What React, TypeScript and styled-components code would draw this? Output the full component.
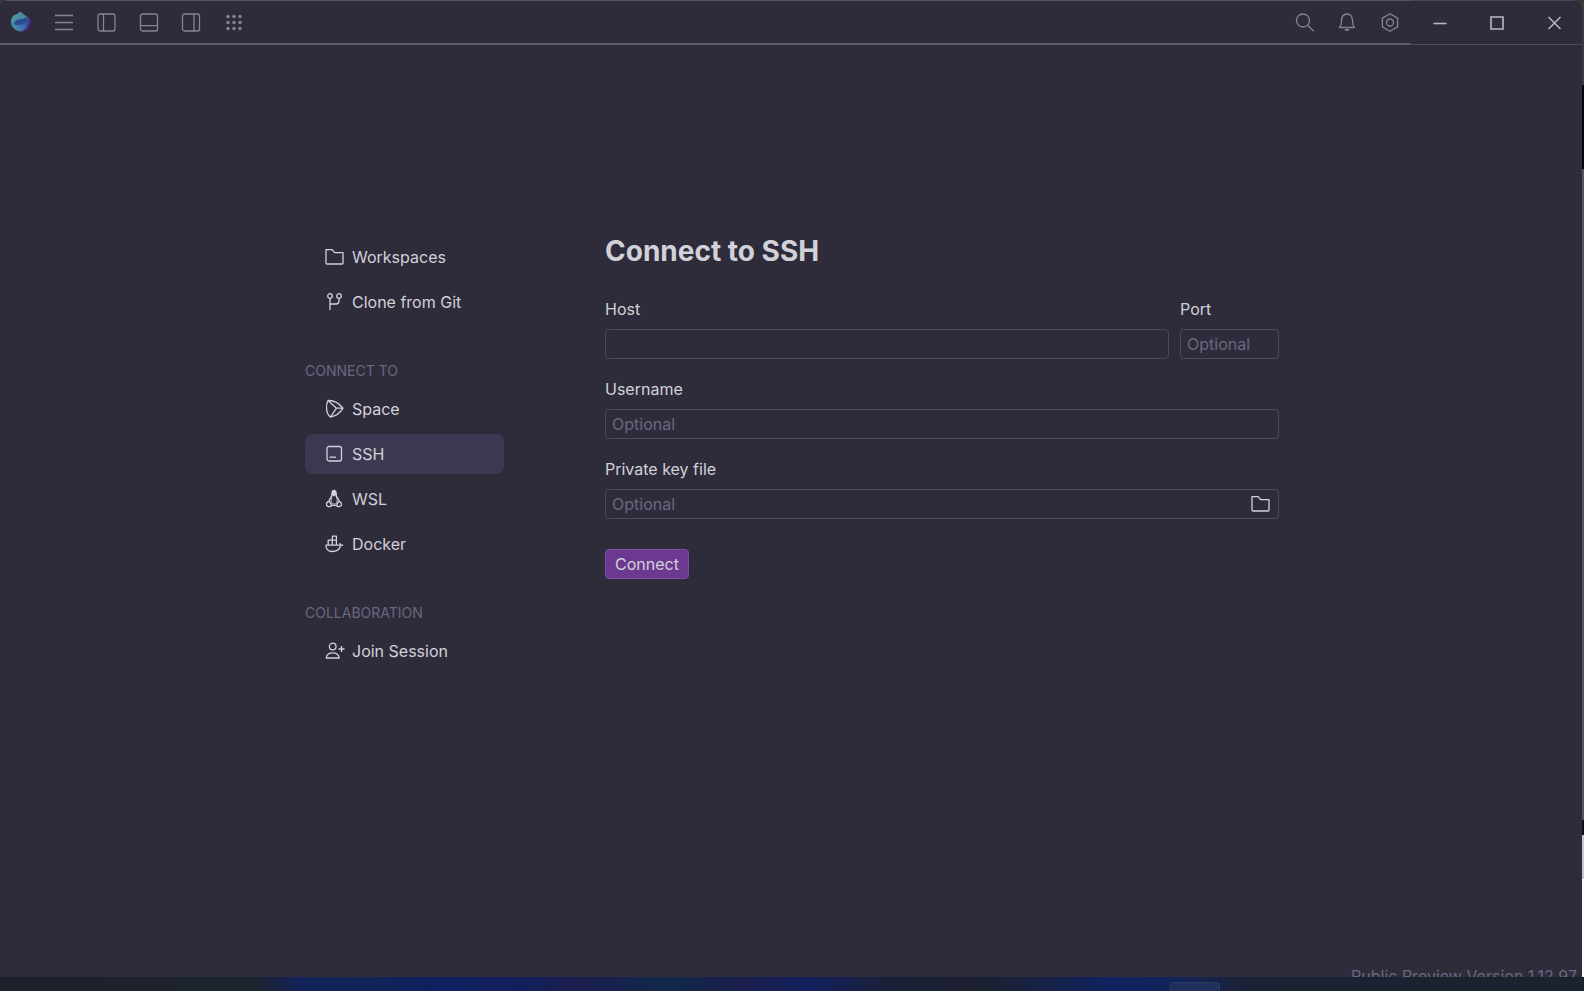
import React from "react";
import styled, { createGlobalStyle } from "styled-components";

const color = {
  surface: "#2e2c3a",
  line: "#5b596b",
  border: "#4c495e",
  text: "#d2d1d9",
  muted: "#6a6780",
  toolIcon: "#86848f",
  selected: "#3d3852",
  primary: "#6b3a90",
};

const GlobalStyle = createGlobalStyle`
  *, *::before, *::after { box-sizing: border-box; }
  body {
    margin: 0;
    background: #37383c;
    color: ${color.text};
    font-family: Inter, "Liberation Sans", sans-serif;
    font-size: 16px;
    line-height: 20px;
  }
  button, input { font: inherit; color: inherit; }
`;

const Desktop = styled.div`
  display: flex;
  flex-direction: column;
  height: 100vh;
`;

const WindowRow = styled.div`
  display: flex;
  flex: 1;
  min-height: 0;
`;

const AppWindow = styled.div`
  display: flex;
  flex-direction: column;
  flex: 1;
  min-width: 0;
  overflow: hidden;
  background: ${color.surface};
  border-radius: 8px 10px 0 0;
`;

const Backdrop = styled.div`
  width: 2px;
  background: linear-gradient(
    #3a3b3e 0 85px,
    #060606 85px 169px,
    #555558 169px 820px,
    #101010 820px 835px,
    #c9c9c9 835px 879px,
    #ffffff 879px
  );
`;

const TitleBar = styled.header`
  display: flex;
  height: 45px;
  flex: none;
`;

const ToolArea = styled.div`
  display: flex;
  flex: 1;
  justify-content: space-between;
  border-top: 1px solid #56555f;
  border-bottom: 2px solid ${color.line};
`;

const Brand = styled.div`
  display: flex;
  align-items: center;
`;

const LogoBox = styled.div`
  display: flex;
  width: 43px;
  padding-left: 10px;
`;

const ToolGroup = styled.div<{ $width: number }>`
  display: flex;
  width: ${(p) => p.$width}px;
  height: 100%;
`;

const BarButton = styled.button`
  display: flex;
  flex: 1;
  align-items: center;
  justify-content: center;
  padding: 0;
  border: 0;
  background: none;
  color: ${color.toolIcon};
`;

const WindowControls = styled.div`
  display: flex;
  width: 171px;
  border-top: 1px solid #4a4a4e;
  border-bottom: 1px solid #4c4961;

  ${BarButton} { color: #b9b8c2; }
`;

const Content = styled.main`
  display: flex;
  flex: 1;
  justify-content: center;
  align-items: flex-start;
  gap: 101px;
  min-height: 0;
  padding: 189px 24px 0 26px;
`;

const Sidebar = styled.nav`
  display: flex;
  flex-direction: column;
  gap: 38px;
  width: 199px;
  padding-top: 3px;
`;

const NavList = styled.ul`
  display: flex;
  flex-direction: column;
  gap: 5px;
  margin: 0;
  padding: 0;
  list-style: none;
`;

const SectionTitle = styled.h2`
  margin: 0 0 7px;
  color: ${color.muted};
  font-size: 14px;
  font-weight: 400;
  line-height: 22px;
`;

const NavButton = styled.button<{ $active?: boolean }>`
  display: flex;
  align-items: center;
  gap: 7px;
  width: 100%;
  height: 40px;
  padding: 0 20px;
  border: 0;
  border-radius: 8px;
  background: ${(p) => (p.$active ? color.selected : "transparent")};
  text-align: left;
  white-space: nowrap;
`;

const Form = styled.form`
  display: flex;
  flex-direction: column;
  flex: 0 1 674px;
  gap: 20px;
`;

const Title = styled.h1`
  margin: 0 0 11px;
  font-size: 28px;
  font-weight: 700;
  line-height: 34px;
`;

const FieldRow = styled.div`
  display: flex;
  gap: 11px;
`;

const Field = styled.div<{ $width?: number }>`
  display: flex;
  flex-direction: column;
  gap: 10px;
  flex: ${(p) => (p.$width ? `0 0 ${p.$width}px` : "1")};
  min-width: 0;
`;

const Label = styled.label`
  line-height: 20px;
`;

const InputFrame = styled.div`
  display: flex;
  align-items: center;
  height: 30px;
  border: 1px solid ${color.border};
  border-radius: 4px;
`;

const Input = styled.input`
  flex: 1;
  min-width: 0;
  height: 28px;
  padding: 0 6px;
  border: 0;
  outline: 0;
  background: none;

  &::placeholder { color: ${color.muted}; opacity: 1; }
`;

const BrowseButton = styled.button`
  display: flex;
  padding: 0 7px;
  border: 0;
  background: none;
`;

const ConnectButton = styled.button`
  align-self: flex-start;
  height: 30px;
  margin-top: 10px;
  padding: 0 9px;
  border: 1px solid #7d4da1;
  border-radius: 4px;
  background: ${color.primary};
`;

const VersionBar = styled.footer`
  height: 10px;
  flex: none;
  overflow: hidden;
  padding-right: 5px;
  color: ${color.muted};
  line-height: 18px;
  text-align: right;
`;

const Taskbar = styled.div`
  display: flex;
  justify-content: flex-end;
  align-items: flex-end;
  height: 14px;
  flex: none;
  padding-right: 23%;
  background: linear-gradient(
    90deg,
    #1c212b 0%, #1c242d 16%, #12235a 19%, #112457 24%, #10205f 27%,
    #121f5c 33%, #1c1d4f 36%, #12284a 42%, #1b1e4c 47%, #12205e 51%,
    #1b2038 56%, #1b212f 62%, #11235f 70%, #12235a 74%, #1b2233 79%,
    #1b232e 100%
  );
`;

const TaskbarItem = styled.div`
  width: 50px;
  height: 9px;
  border: 1px solid #2c3f66;
  border-bottom: 0;
  border-radius: 4px 4px 0 0;
  background: #1f305a;
`;

const Glyph = styled.svg`
  display: block;
  flex: none;
  fill: none;
  stroke: currentColor;
`;

type IconProps = { children: React.ReactNode; weight?: number };

const Icon = ({ children, weight = 1.3 }: IconProps) => (
  <Glyph width="20" height="20" viewBox="0 0 20 20" strokeWidth={weight} strokeLinejoin="round" aria-hidden="true">
    {children}
  </Glyph>
);

const Logo = () => (
  <Glyph width="22" height="22" viewBox="0 0 22 22" aria-hidden="true">
    <defs>
      <linearGradient id="shell" x1="0" y1="0" x2="1" y2="0.5">
        <stop offset="0" stopColor="#4f9f9c" />
        <stop offset="0.65" stopColor="#4389a0" />
        <stop offset="1" stopColor="#45308c" />
      </linearGradient>
      <linearGradient id="core" x1="0" y1="1" x2="1" y2="0">
        <stop offset="0" stopColor="#4a94ae" />
        <stop offset="0.5" stopColor="#3c6cb0" />
        <stop offset="1" stopColor="#2b4388" />
      </linearGradient>
    </defs>
    <path d="M17 6.500c3 0 4.200 1.200 4 4.500-.3 5-4 9.500-9 9.500z" fill="#41238a" stroke="none" />
    <path d="M6 3.500C8 3 9 1 10.500 1s2.500 2.500 5 3.500S20 8 19.500 11.500c-.8 5-4.500 9.200-8.500 9.200S1 17 1 11c0-4 2-7 5-7.500z" fill="url(#shell)" stroke="none" />
    <path d="M3.500 13.500C4 10 6.500 8.500 10 8.300c3-.2 5.500-1.300 7.500-.8 2.500 4-1 10-5 11.500-4.500 1-8.500-1.500-9-5.500z" fill="url(#core)" stroke="none" />
    <path d="M4 12.500C5 9.800 7.500 8.700 10 8.500c3-.2 5.500-1.300 7.300-.8-.3 3.300-3.300 5.300-6.800 6s-5.500.3-6.500-1.200z" fill="#2c4c92" stroke="none" />
  </Glyph>
);

const MenuIcon = () => <Icon><path d="M1 3.500h18M1 10.500h18M1 17.500h18" /></Icon>;
const PanelLeftIcon = () => (
  <Icon><rect x="1" y="2" width="17" height="17" rx="2" /><path d="M6.500 2v17" /></Icon>
);
const PanelBottomIcon = () => (
  <Icon><rect x="1.500" y="2" width="17" height="17" rx="2" /><path d="M1.500 13.700h17" /></Icon>
);
const PanelRightIcon = () => (
  <Icon><rect x="1.500" y="2" width="17" height="17" rx="2" /><path d="M13 2v17" /></Icon>
);
const AppsIcon = () => (
  <Icon>
    {[4.5, 10.5, 16.5].map((y) =>
      [4, 10, 16].map((x) => <circle key={`${x}-${y}`} cx={x} cy={y} r="1.700" fill="currentColor" stroke="none" />),
    )}
  </Icon>
);
const SearchIcon = () => <Icon><circle cx="8" cy="8.500" r="6.500" /><path d="m12.700 13.200 6 6" /></Icon>;
const BellIcon = () => (
  <Icon>
    <path d="M2.500 15.500h15c-1.500-1.700-2-3.500-2-6.500 0-4.500-2-7-5.500-7S4.500 4.500 4.500 9c0 3-.5 4.800-2 6.500z" />
    <path d="M7.500 17h5c-.3 1.300-1.200 2-2.500 2s-2.200-.7-2.500-2z" fill="currentColor" stroke="none" />
  </Icon>
);
const SettingsIcon = () => (
  <Icon><path d="m10 1.700 7.600 4.400v8.800L10 19.300l-7.600-4.400V6.100z" /><circle cx="10" cy="10.500" r="3.500" /></Icon>
);
const MinimizeIcon = () => <Icon weight={1.6}><path d="M3.500 10.500h13" /></Icon>;
const MaximizeIcon = () => <Icon weight={1.6}><path d="M4 4h12v12H4z" strokeLinejoin="miter" /></Icon>;
const CloseIcon = () => <Icon weight={1.5}><path d="m4.500 4 12 12M16.500 4l-12 12" /></Icon>;

const FolderIcon = () => (
  <Icon><path d="M1 16V2.700h6.200l2.300 3H18V16a1 1 0 0 1-1 1H2a1 1 0 0 1-1-1z" /></Icon>
);
const BranchIcon = () => (
  <Icon>
    <circle cx="5" cy="4" r="2.300" /><circle cx="14" cy="4" r="2.300" />
    <path d="M5 6.300V18M14 6.300V9c0 2-1 3-3 3H5" />
  </Icon>
);
const SpaceIcon = () => (
  <Icon>
    <path d="M3 1.500c6-.2 11 2.500 15 7.700-3 5-7 8-12.500 8.800C1 15 .5 6 3 1.500z" />
    <path d="m3 1.500 8.500 7.700H18M11.500 9.200 5.500 18" />
  </Icon>
);
const TerminalIcon = () => (
  <Icon><rect x="2" y="2.500" width="14.500" height="14.500" rx="2" /><path d="M4.500 13.200H11" /></Icon>
);
const PenguinIcon = () => (
  <Icon>
    <path d="M6.300 5.500V4c0-2 1-3.300 2.700-3.300S11.800 2 11.800 4v1.500L9 7.500z" fill="currentColor" stroke="none" />
    <path d="M6.800 5v2c-1.500 2-2.500 3.500-2.800 5.500M11.300 5v2c1.500 2 2.700 3.500 3 5.500" />
    <path d="M6.800 7.500C5.500 11 6 13.500 7.500 15h3.300c1.500-1.500 2-4 .5-7.500" strokeWidth="0.900" />
    <path d="M3.800 12.500c1 0 2.800 2.800 2.500 4-.3 1.500-2 1.300-3.500.8s-1.500-1-1.300-2.300 1-2.500 2.300-2.500zM14.300 12.500c-1 0-2.800 2.800-2.500 4 .3 1.500 2 1.300 3.500.6s1.700-1 1.300-2.100-1-2.500-2.300-2.500zM6.300 16.300h5.500" />
  </Icon>
);
const DockerIcon = () => (
  <Icon>
    <path d="M.7 11.200h17.500M.9 11.200c.1 4 2.300 6.300 6.300 6.300 4.500 0 7.300-2 8.300-5.500M14.700 9.200c.3 1.500 1.300 2.300 3.300 2" />
    <path d="M3.200 11V6.200h8.200V11M7.300 11V2.200h4.100v4" />
  </Icon>
);
const PersonAddIcon = () => (
  <Icon>
    <circle cx="7.700" cy="5.500" r="3.300" />
    <path d="M1.200 17c.4-3.500 3-5.200 6.500-5.200s6.100 1.700 6.500 5.200zM13.500 8h6M16.500 5v6" />
  </Icon>
);

type NavEntry = { label: string; icon: React.ReactNode; active?: boolean };
type NavGroup = { title?: string; items: NavEntry[] };

const navigation: NavGroup[] = [
  {
    items: [
      { label: "Workspaces", icon: <FolderIcon /> },
      { label: "Clone from Git", icon: <BranchIcon /> },
    ],
  },
  {
    title: "CONNECT TO",
    items: [
      { label: "Space", icon: <SpaceIcon /> },
      { label: "SSH", icon: <TerminalIcon />, active: true },
      { label: "WSL", icon: <PenguinIcon /> },
      { label: "Docker", icon: <DockerIcon /> },
    ],
  },
  { title: "COLLABORATION", items: [{ label: "Join Session", icon: <PersonAddIcon /> }] },
];

export default function App() {
  return (
    <>
      <GlobalStyle />
      <Desktop>
        <WindowRow>
          <AppWindow>
            <TitleBar>
              <ToolArea>
                <Brand>
                  <LogoBox><Logo /></LogoBox>
                  <ToolGroup $width={212}>
                    <BarButton aria-label="Main menu"><MenuIcon /></BarButton>
                    <BarButton aria-label="Toggle left panel"><PanelLeftIcon /></BarButton>
                    <BarButton aria-label="Toggle bottom panel"><PanelBottomIcon /></BarButton>
                    <BarButton aria-label="Toggle right panel"><PanelRightIcon /></BarButton>
                    <BarButton aria-label="All tools"><AppsIcon /></BarButton>
                  </ToolGroup>
                </Brand>
                <ToolGroup $width={127}>
                  <BarButton aria-label="Search"><SearchIcon /></BarButton>
                  <BarButton aria-label="Notifications"><BellIcon /></BarButton>
                  <BarButton aria-label="Settings"><SettingsIcon /></BarButton>
                </ToolGroup>
              </ToolArea>
              <WindowControls>
                <BarButton aria-label="Minimize"><MinimizeIcon /></BarButton>
                <BarButton aria-label="Maximize"><MaximizeIcon /></BarButton>
                <BarButton aria-label="Close"><CloseIcon /></BarButton>
              </WindowControls>
            </TitleBar>
            <Content>
              <Sidebar>
                {navigation.map((group, index) => (
                  <div key={index}>
                    {group.title && <SectionTitle>{group.title}</SectionTitle>}
                    <NavList>
                      {group.items.map((item) => (
                        <li key={item.label}>
                          <NavButton $active={item.active} aria-current={item.active ? "page" : undefined}>
                            {item.icon}
                            {item.label}
                          </NavButton>
                        </li>
                      ))}
                    </NavList>
                  </div>
                ))}
              </Sidebar>
              <Form onSubmit={(event) => event.preventDefault()}>
                <Title>Connect to SSH</Title>
                <FieldRow>
                  <Field>
                    <Label htmlFor="host">Host</Label>
                    <InputFrame><Input id="host" type="text" /></InputFrame>
                  </Field>
                  <Field $width={99}>
                    <Label htmlFor="port">Port</Label>
                    <InputFrame><Input id="port" type="text" placeholder="Optional" /></InputFrame>
                  </Field>
                </FieldRow>
                <Field>
                  <Label htmlFor="username">Username</Label>
                  <InputFrame><Input id="username" type="text" placeholder="Optional" /></InputFrame>
                </Field>
                <Field>
                  <Label htmlFor="key-file">Private key file</Label>
                  <InputFrame>
                    <Input id="key-file" type="text" placeholder="Optional" />
                    <BrowseButton type="button" aria-label="Browse for key file"><FolderIcon /></BrowseButton>
                  </InputFrame>
                </Field>
                <ConnectButton type="submit">Connect</ConnectButton>
              </Form>
            </Content>
            <VersionBar>Public Preview Version 1.12.97</VersionBar>
          </AppWindow>
          <Backdrop />
        </WindowRow>
        <Taskbar><TaskbarItem /></Taskbar>
      </Desktop>
    </>
  );
}
